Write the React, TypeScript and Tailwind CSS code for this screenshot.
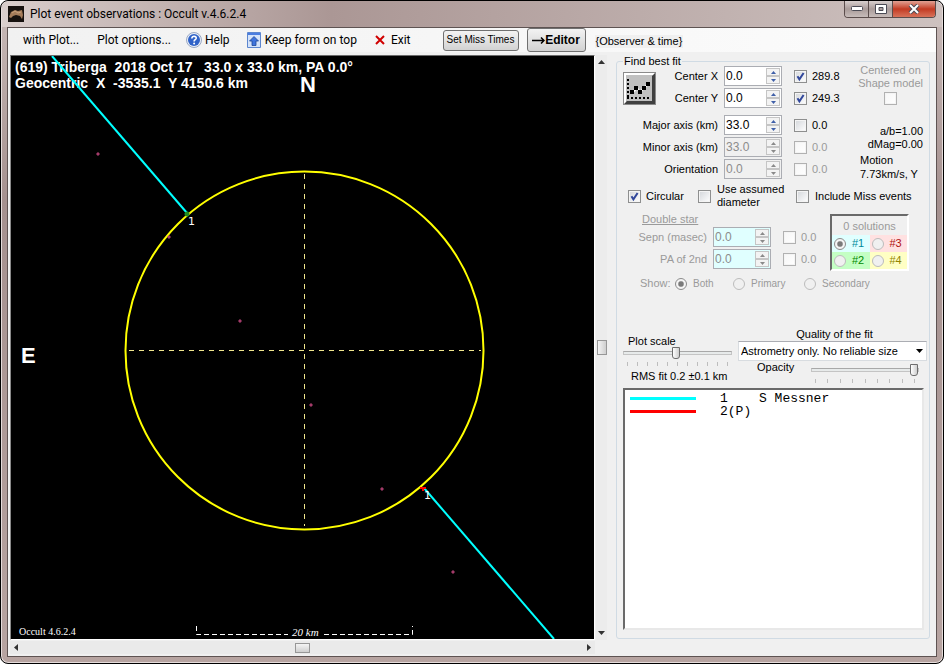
import React, { useState } from 'react';

interface SpinRowProps {
  id: string;
  label: string;
  value: string;
  fit: string;
  checked?: boolean;
  disabled?: boolean;
  tint?: boolean;
}

const CheckBox: React.FC<{ id: string; checked?: boolean; disabled?: boolean }> = ({ id, checked, disabled }) => (
  <span className="relative block h-[13px] w-[13px] shrink-0">
    <input
      id={id}
      type="checkbox"
      defaultChecked={checked}
      disabled={disabled}
      className="peer block h-[13px] w-[13px] appearance-none border border-[#8e8f8f] bg-[#f4f4f4] bg-linear-to-br from-[#d3d6da] to-white shadow-[inset_0_0_0_1px_#f4f4f4] disabled:border-[#b1b1b1] disabled:from-[#f6f6f6]"
    />
    <svg viewBox="0 0 13 13" className="pointer-events-none absolute inset-0 hidden h-full w-full peer-checked:block">
      <path d="M3.5 6.2 5.4 9.4 9.6 3" fill="none" stroke="#31479b" strokeWidth="2" />
    </svg>
  </span>
);

const Radio: React.FC<{ id: string; name: string; checked?: boolean }> = ({ id, name, checked }) => (
  <input
    id={id}
    name={name}
    type="radio"
    defaultChecked={checked}
    disabled
    className="block h-3 w-3 shrink-0 appearance-none rounded-full border border-[#bcbcbc] bg-[#f0f0f0] checked:border-[#8c8c8c] checked:bg-radial checked:from-[#7a7a7a] checked:from-30% checked:to-[#f4f4f4] checked:to-50%"
  />
);

const Spinner: React.FC<{ id: string; value: string; disabled?: boolean; tint?: boolean }> = ({ id, value, disabled, tint }) => {
  const [text, setText] = useState(value);
  const step = (by: number) => setText((parseFloat(text) + by).toFixed(1));
  const arrow = disabled ? '#8a8a8a' : '#3f5fa8';

  return (
    <div className={`flex h-5 w-[58px] shrink-0 border border-[#abadb3] p-px ${tint ? 'bg-[#e0ffff]' : disabled ? 'bg-[#f0f0f0]' : 'bg-white'}`}>
      <input
        id={id}
        type="text"
        value={text}
        disabled={disabled}
        onChange={(e) => setText(e.target.value)}
        className="h-4 min-w-0 flex-1 bg-transparent text-[12px] leading-4 text-black outline-none disabled:text-[#8c8c8c]"
      />
      <div className="flex w-[14px] flex-col bg-[#f0f0f0]">
        <button type="button" aria-label="Up" disabled={disabled} onClick={() => step(0.1)} className="flex flex-1 items-center justify-center border border-[#c5c5c5] bg-[#f3f3f3]">
          <svg viewBox="0 0 5 3" className="h-[3px] w-[5px]"><path d="M0 3 2.5 0 5 3z" fill={arrow} /></svg>
        </button>
        <button type="button" aria-label="Down" disabled={disabled} onClick={() => step(-0.1)} className="flex flex-1 items-center justify-center border border-[#c5c5c5] bg-[#f3f3f3]">
          <svg viewBox="0 0 5 3" className="h-[3px] w-[5px]"><path d="M0 0 2.5 3 5 0z" fill={arrow} /></svg>
        </button>
      </div>
    </div>
  );
};

const SpinRow: React.FC<SpinRowProps> = ({ id, label, value, fit, checked, disabled, tint }) => (
  <div className="flex h-[22px] items-center justify-end">
    <label htmlFor={id} className={`mr-[6px] ${tint ? 'text-[#9a9a9a]' : ''}`}>{label}</label>
    <Spinner id={id} value={value} disabled={disabled} tint={tint} />
    <span className="w-3" />
    <CheckBox id={`${id}-fit`} checked={checked} disabled={disabled} />
    <label htmlFor={`${id}-fit`} className={`w-[39px] pl-[5px] ${disabled ? 'text-[#9a9a9a]' : ''}`}>{fit}</label>
  </div>
);

const Slider: React.FC<{ id: string; value: number; ticks: number }> = ({ id, value, ticks }) => (
  <div className="w-full">
    <input
      id={id}
      type="range"
      defaultValue={value}
      className="block h-[14px] w-full appearance-none bg-transparent [&::-webkit-slider-runnable-track]:h-1 [&::-webkit-slider-runnable-track]:border [&::-webkit-slider-runnable-track]:border-[#c4c4c4] [&::-webkit-slider-runnable-track]:border-t-[#a8a8a8] [&::-webkit-slider-runnable-track]:bg-[#e7eaea] [&::-webkit-slider-thumb]:-mt-[5px] [&::-webkit-slider-thumb]:h-3 [&::-webkit-slider-thumb]:w-2 [&::-webkit-slider-thumb]:appearance-none [&::-webkit-slider-thumb]:rounded-b-[3px] [&::-webkit-slider-thumb]:border [&::-webkit-slider-thumb]:border-[#6e6e6e] [&::-webkit-slider-thumb]:bg-linear-to-r [&::-webkit-slider-thumb]:from-white [&::-webkit-slider-thumb]:to-[#cfcfcf]"
    />
    <div className="mt-[2px] flex justify-between px-1">
      {Array.from({ length: ticks }, (_, i) => (
        <span key={i} className="h-1 w-px bg-[#bdbdbd]" />
      ))}
    </div>
  </div>
);

const stars = [
  [87, 98], [158, 181], [229, 265], [300, 349], [371, 433], [442, 516],
];

const solutions = [
  { n: 1, text: '#1', cls: 'bg-[#e0ffff] text-[#008b9b]' },
  { n: 3, text: '#3', cls: 'bg-[#ffe1e1] text-[#b01010]' },
  { n: 2, text: '#2', cls: 'bg-[#c4ffc4] text-[#008a00]' },
  { n: 4, text: '#4', cls: 'bg-[#ffffc4] text-[#938400]' },
];

const observers = [
  { line: 'bg-[#00ffff]', text: '1    S Messner' },
  { line: 'bg-[#ff0000]', text: '2(P)' },
];

const EventPlot: React.FC = () => (
  <svg viewBox="0 0 583 583" className="block h-auto w-full bg-black" role="img" aria-label="Event plot">
    <g fill="#fff" className="font-['Liberation_Sans',sans-serif] text-[14px] font-bold">
      <text x="4" y="16" className="whitespace-pre">(619) Triberga  2018 Oct 17   33.0 x 33.0 km, PA 0.0°</text>
      <text x="4" y="32" className="whitespace-pre">Geocentric  X  -3535.1  Y 4150.6 km</text>
      <text x="289" y="36" className="text-[22px]">N</text>
      <text x="10" y="307" className="text-[22px]">E</text>
    </g>
    <g stroke="#f0e68c" strokeWidth="1" strokeDasharray="5 5">
      <path d="M293.5 118V470" />
      <path d="M118 294.5H470" />
    </g>
    <circle cx="293.5" cy="294.5" r="179" fill="none" stroke="#ffff00" strokeWidth="2" />
    <g stroke="#00ffff" strokeWidth="2">
      <path d="M41 0 176 157" />
      <path d="M413 432 543 583" />
    </g>
    <circle cx="176" cy="158" r="2.5" fill="#228b22" />
    <path d="M409 431h6v2h-2v2h-2v-2h-2z" fill="#ff0000" />
    {stars.map(([x, y]) => (
      <circle key={x} cx={x} cy={y} r="1.2" fill="#702040" stroke="#d0508c" strokeWidth="0.8" />
    ))}
    <g fill="#fff" className="font-['DejaVu_Sans',sans-serif] text-[11px]">
      <text x="177" y="169">1</text>
      <text x="413" y="443">1</text>
    </g>
    <path d="M185.500 570V578.500H277M313 578.500H401.500V570" fill="none" stroke="#fff" strokeDasharray="5 3" />
    <g fill="#fff" className="font-['Liberation_Serif',serif]">
      <text x="281" y="580" className="text-[11px] italic">20 km</text>
      <text x="8" y="579" className="text-[10px]">Occult 4.6.2.4</text>
    </g>
  </svg>
);

const App: React.FC = () => {
  const [quality, setQuality] = useState('astrometry');

  return (
    <div className="flex min-h-screen flex-col rounded-lg border border-black bg-linear-to-b from-[#c3b4b2] from-5% via-[#a5918f] via-30% to-[#b7a4a1] px-[6px] pb-[6px] font-['Liberation_Sans',Arial,sans-serif] text-[11px] leading-[13px] text-black shadow-[inset_0_0_0_1px_#e5dcdb]">
      {/* TITLE BAR */}
      <header className="-mx-[5px] flex h-[26px] items-start justify-between rounded-t-lg bg-linear-to-r from-[#d9cecc] via-[#ab9795] via-35% to-[#cdc1bf] pr-[6px] pl-[6px]">
        <div className="flex h-[26px] items-center gap-[6px]">
          <svg viewBox="0 0 16 16" className="h-4 w-4">
            <path d="M0 0H16V16H0z" fill="#17120f" />
            <path d="M1 11 3 6 7 4 10 5 14 4 15 9 14 13 12 10 8 9 5 10 3 12z" fill="#a47c5a" />
            <path d="M4 7 7 5 10 7 13 6" fill="none" stroke="#c9a27c" />
          </svg>
          <h1 className="font-[Roboto,sans-serif] text-[12px] leading-4">Plot event observations : Occult v.4.6.2.4</h1>
        </div>
        <div className="flex h-[17px] w-[92px] overflow-hidden rounded-b border border-t-0 border-[#5b4d4c]">
          <button type="button" aria-label="Minimize" className="flex flex-1 items-center justify-center border-r border-[#5b4d4c] bg-linear-to-b from-[#d8cfce] via-[#a99b99] to-[#c7bcba]">
            <svg viewBox="0 0 12 6" className="h-[6px] w-3"><rect x=".5" y=".5" width="11" height="4" rx="1" fill="#fff" stroke="#4b4b55" /></svg>
          </button>
          <button type="button" aria-label="Maximize" className="flex flex-1 items-center justify-center border-r border-[#5b4d4c] bg-linear-to-b from-[#d8cfce] via-[#a99b99] to-[#c7bcba]">
            <svg viewBox="0 0 12 10" className="h-[10px] w-3"><path d="M.5.5h11v9H.5zM4 3.500v3h4v-3z" fill="#fff" fillRule="evenodd" stroke="#4b4b55" /></svg>
          </button>
          <button type="button" aria-label="Close" className="flex w-[42px] items-center justify-center bg-linear-to-b from-[#e0a093] via-[#c23a22] to-[#d8725a]">
            <svg viewBox="0 0 12 10" className="h-[10px] w-3">
              <path d="M2 1 10 9M10 1 2 9" stroke="#4b4b55" strokeWidth="4" />
              <path d="M2 1 10 9M10 1 2 9" stroke="#fff" strokeWidth="2" />
            </svg>
          </button>
        </div>
      </header>

      <main className="flex flex-1 flex-col border border-[#5e5352] bg-[#f0f0f0]">
        {/* MENU */}
        <nav className="flex h-6 shrink-0 items-center bg-linear-to-r from-[#f1f1f1] to-[#fcfcfc] pl-[15px] font-[Roboto,sans-serif] text-[12px] leading-4">
          <button type="button" className="mr-[18px]">with Plot...</button>
          <button type="button" className="mr-[15px]">Plot options...</button>
          <button type="button" className="mr-[17px] flex items-center gap-[3px]">
            <svg viewBox="0 0 16 16" className="h-4 w-4">
              <circle cx="8" cy="8" r="7.500" fill="#e9eef8" stroke="#9aa9c4" />
              <circle cx="8" cy="8" r="6" fill="#2f62c8" />
              <path d="M5.800 6.500Q6 4.300 8.100 4.300 10.300 4.400 10.200 6.200 10.100 7.300 8.800 8 8.100 8.500 8.100 9.600" fill="none" stroke="#fff" strokeWidth="1.600" />
              <circle cx="8.100" cy="11.600" r="1" fill="#fff" />
            </svg>
            Help
          </button>
          <button type="button" className="mr-[18px] flex items-center gap-1">
            <svg viewBox="0 0 14 16" className="h-4 w-[14px]">
              <path d="M.5.5h13v15H.5z" fill="#d4e3fa" stroke="#5c86cf" />
              <path d="M1 1h12v2H1z" fill="#4a7de0" />
              <path d="M7 4.500 11.500 9H9v4.500H5V9H2.500z" fill="#3f74dc" stroke="#1e4797" strokeWidth=".8" />
            </svg>
            Keep form on top
          </button>
          <button type="button" className="flex items-center gap-[6px]">
            <svg viewBox="0 0 10 10" className="h-[10px] w-[10px]"><path d="M1 1 9 9M9 1 1 9" stroke="#d00000" strokeWidth="2" /></svg>
            Exit
          </button>
          <button type="button" className="ml-8 h-[21px] w-[76px] shrink-0 rounded-[3px] border border-[#707070] bg-linear-to-b from-[#f3f3f3] to-[#d2d2d2] font-['Liberation_Sans',sans-serif] text-[10px] leading-3 whitespace-nowrap">Set Miss Times</button>
          <button type="button" className="ml-2 flex h-6 w-[59px] shrink-0 items-center justify-center rounded-[3px] border border-[#707070] bg-linear-to-b from-[#f3f3f3] to-[#d2d2d2] font-['Liberation_Sans',sans-serif] text-[12px] font-bold">
            <svg viewBox="0 0 13 7" className="h-[7px] w-[13px]"><path d="M0 3.500H12M9 .5 12 3.500 9 6.500" fill="none" stroke="#000" strokeWidth="1.500" /></svg>
            Editor
          </button>
          <span className="mt-[3px] ml-[9px] bg-[#f0f0f0] px-px font-['Liberation_Sans',sans-serif] text-[11px] leading-[13px] whitespace-nowrap">{'{Observer & time}'}</span>
        </nav>

        <div className="flex flex-1 pt-[3px] pl-[2px]">
          {/* PLOT AREA */}
          <div className="min-w-0 flex-1">
            <div className="border border-t-[#6a6a6a] border-r-white border-b-white border-l-[#8a8a8a]">
              <EventPlot />
            </div>
            <div className="mt-px flex h-[13px] items-center justify-between bg-[#eaeaea] px-1">
              <button type="button" aria-label="Scroll left">
                <svg viewBox="0 0 4 7" className="h-[7px] w-1"><path d="M4 0 0 3.500 4 7z" fill="#333" /></svg>
              </button>
              <span className="h-[10px] w-[15px] border border-[#979797] bg-linear-to-b from-[#f4f4f4] to-[#cfcfcf]" />
              <button type="button" aria-label="Scroll right">
                <svg viewBox="0 0 4 7" className="h-[7px] w-1"><path d="M0 0 4 3.500 0 7z" fill="#333" /></svg>
              </button>
            </div>
          </div>
          <div className="mr-[9px] mb-[16px] ml-px flex w-[11px] flex-col items-center justify-between bg-[#ececec] py-[5px]">
            <button type="button" aria-label="Scroll up">
              <svg viewBox="0 0 7 4" className="h-1 w-[7px]"><path d="M0 4 3.500 0 7 4z" fill="#333" /></svg>
            </button>
            <span className="h-[15px] w-[10px] border border-[#979797] bg-linear-to-r from-[#f4f4f4] to-[#cfcfcf]" />
            <button type="button" aria-label="Scroll down">
              <svg viewBox="0 0 7 4" className="h-1 w-[7px]"><path d="M0 0 3.500 4 7 0z" fill="#333" /></svg>
            </button>
          </div>

          {/* FIT PANEL */}
          <fieldset className="mr-[6px] mb-[17px] flex w-[314px] shrink-0 flex-col rounded-[3px] border border-[#d0dbe4] pr-[5px] pb-2 pl-[6px]">
            <legend className="px-px">Find best fit</legend>

            <div className="-mt-[3px] flex">
              <div className="flex w-[223px] flex-col">
                <div className="flex">
                  <button type="button" aria-label="Fit" className="mt-[7px] h-[33px] w-[33px] border border-[#8a8a8a] bg-[#c0c0c0]">
                    <svg viewBox="0 0 31 31" className="block h-[31px] w-[31px]">
                      <path d="M0 31V0H31V2H2V31z" fill="#fff" />
                      <path d="M31 0V31H0L3 28H28V3z" fill="#404040" />
                      <g stroke="#000" strokeWidth="2" strokeDasharray="2 2">
                        <path d="M4 6V24" />
                        <path d="M3 25H26" />
                      </g>
                      <path d="M8 20 13 15 16 19 20 15 25 10" fill="none" stroke="#fff" strokeWidth="2" />
                      <path d="M6 17h4v4H6zM10 13h4v4h-4zM14 17h4v4h-4zM18 13h4v4h-4zM22 9h4v4h-4z" fill="#000" />
                    </svg>
                  </button>
                  <div className="flex-1">
                    <SpinRow id="center-x" label="Center X" value="0.0" fit="289.8" checked />
                    <SpinRow id="center-y" label="Center Y" value="0.0" fit="249.3" checked />
                  </div>
                </div>
                <div className="mt-[5px]">
                  <SpinRow id="major" label="Major axis (km)" value="33.0" fit="0.0" />
                  <SpinRow id="minor" label="Minor axis (km)" value="33.0" fit="0.0" disabled />
                  <SpinRow id="orientation" label="Orientation" value="0.0" fit="0.0" disabled />
                </div>
              </div>
              <div className="-mt-px flex flex-1 flex-col items-end pr-px whitespace-nowrap">
                <div className="flex flex-col items-center text-[#9a9a9a]">
                  <label htmlFor="centered" className="text-center">Centered on<br />Shape model</label>
                  <span className="mt-[2px]"><CheckBox id="centered" disabled /></span>
                </div>
                <p className="mt-5 text-right">a/b=1.00<br />dMag=0.00</p>
                <p className="mt-[2px] w-[63px] leading-[14px]">Motion<br />7.73km/s, Y</p>
              </div>
            </div>

            <div className="mt-[2px] flex items-center pl-[5px]">
              <CheckBox id="circular" checked />
              <label htmlFor="circular" className="w-[57px] pl-[5px]">Circular</label>
              <CheckBox id="assumed" />
              <label htmlFor="assumed" className="w-[85px] pl-[6px] leading-[13px]">Use assumed<br />diameter</label>
              <CheckBox id="miss" />
              <label htmlFor="miss" className="pl-[6px] whitespace-nowrap">Include Miss events</label>
            </div>

            <div className="mt-1 flex text-[#9a9a9a]">
              <div className="w-[207px]">
                <h2 className="pl-[19px] underline">Double star</h2>
                <div className="-ml-1 w-[216px]">
                  <SpinRow id="sepn" label="Sepn (masec)" value="0.0" fit="0.0" disabled tint />
                  <SpinRow id="pa" label="PA of 2nd" value="0.0" fit="0.0" disabled tint />
                </div>
              </div>
              <div className="mt-px h-[57px] w-[79px] border-2 border-t-[#6a6a6a] border-r-white border-b-white border-l-[#6a6a6a]">
                <p className="pt-1 pb-[2px] text-center">0 solutions</p>
                <div className="grid grid-cols-2">
                  {solutions.map((s) => (
                    <label key={s.n} htmlFor={`sol-${s.n}`} className={`flex h-[17px] items-center gap-[6px] pl-[2px] ${s.cls}`}>
                      <Radio id={`sol-${s.n}`} name="solution" checked={s.n === 1} />
                      {s.text}
                    </label>
                  ))}
                </div>
              </div>
            </div>

            <div className="mt-[6px] flex items-center pl-[17px] text-[#9a9a9a]">
              <span className="w-[35px]">Show:</span>
              <Radio id="both" name="show" checked />
              <label htmlFor="both" className="w-[46px] pl-[6px] text-[10px]">Both</label>
              <Radio id="primary" name="show" />
              <label htmlFor="primary" className="w-[59px] pl-[6px] text-[10px]">Primary</label>
              <Radio id="secondary" name="show" />
              <label htmlFor="secondary" className="pl-[6px] text-[10px]">Secondary</label>
            </div>

            <div className="mt-[38px] flex justify-between">
              <div className="w-[109px] pt-[7px]">
                <label htmlFor="scale" className="block pl-[5px]">Plot scale</label>
                <div className="-mt-[2px]">
                  <Slider id="scale" value={48} ticks={11} />
                </div>
                <p className="pt-1 pl-2 whitespace-nowrap">RMS fit 0.2 ±0.1 km</p>
              </div>
              <div className="-mr-[3px] w-[189px]">
                <label htmlFor="quality" className="block pl-1 text-center">Quality of the fit</label>
                <div className="relative">
                  <select
                    id="quality"
                    value={quality}
                    onChange={(e) => setQuality(e.target.value)}
                    className="block h-5 w-full appearance-none border border-[#d8dce0] border-t-[#abadb3] bg-white pl-[2px]"
                  >
                    <option value="astrometry">Astrometry only. No reliable size</option>
                    <option value="good">Reliable size</option>
                  </select>
                  <svg viewBox="0 0 7 4" className="pointer-events-none absolute top-2 right-1 h-1 w-[7px]"><path d="M0 0 3.500 4 7 0z" fill="#000" /></svg>
                </div>
                <div className="flex pr-2 pl-[19px]">
                  <label htmlFor="opacity" className="w-[54px] shrink-0">Opacity</label>
                  <div className="flex-1 pt-[2px]">
                    <Slider id="opacity" value={100} ticks={9} />
                  </div>
                </div>
              </div>
            </div>

            <ul className="mt-[5px] flex-1 border-2 border-t-[#6a6a6a] border-r-[#e8e8e8] border-b-[#e8e8e8] border-l-[#6a6a6a] bg-white py-[2px] pl-[5px] font-['Liberation_Mono',monospace] text-[13px] leading-[13px]">
              {observers.map((o) => (
                <li key={o.text} className="flex items-center gap-6 whitespace-pre">
                  <span className={`h-[3px] w-[66px] ${o.line}`} />
                  {o.text}
                </li>
              ))}
            </ul>
          </fieldset>
        </div>
      </main>
    </div>
  );
};

export default App;
